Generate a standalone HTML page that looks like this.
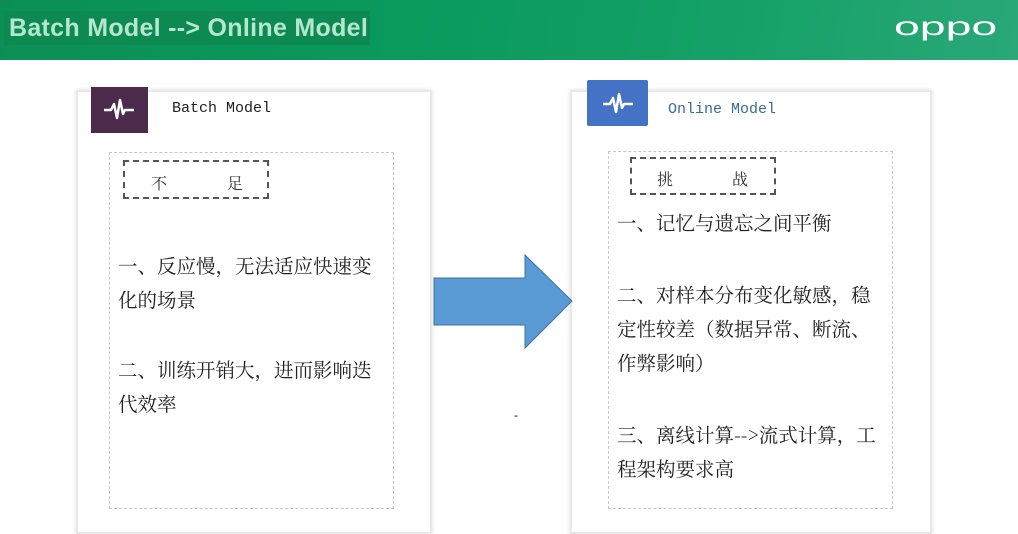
<!DOCTYPE html><html><head><meta charset="utf-8"><style>
body{margin:0;width:1018px;height:517px;overflow:hidden;background:#fff;position:relative;font-family:"Liberation Serif","Noto Serif CJK SC",serif}
.hd{position:absolute;left:0;top:0;width:1018px;height:60px;background:linear-gradient(100deg,#0b8f55 0%,#0a9a5c 40%,#14a066 70%,#2aa878 100%)}
.tt{position:absolute;left:4px;top:11px;width:366px;height:34px;background:#0c8a52;color:#b5e6cf;font:bold 25px "Liberation Sans",sans-serif;line-height:34px;padding-left:5px;box-sizing:border-box;letter-spacing:0.3px}
.oppo{position:absolute;left:894px;top:8px;color:#fff;font:32px "Liberation Sans",sans-serif;transform-origin:left center;transform:scale(1.45,0.8)}
.p{position:absolute;background:#fff;border:2px solid #e8e8e8;box-shadow:0 0 4px #ddd}
.ic{position:absolute}
.in{position:absolute;border:1px dashed #c8c8c8}
.lb{position:absolute;border:2px dashed #555;font-size:16px;color:#333;box-sizing:border-box}
.tx{position:absolute;font-size:19.5px;color:#222;line-height:34px;font-family:"Noto Serif CJK SC",serif}
.mono{position:absolute;font:15px "Liberation Mono",monospace}
</style></head><body>
<div class="hd"><div class="tt">Batch Model --&gt; Online Model</div><div class="oppo">oppo</div></div>
<div class="p" style="left:76px;top:90px;width:352px;height:440px"></div>
<div class="p" style="left:570px;top:90px;width:358px;height:440px"></div>
<div class="ic" style="left:91px;top:87px;width:57px;height:46px;background:#4b2a4b"></div>
<div class="ic" style="left:587px;top:80px;width:61px;height:46px;background:#4472c4;border-radius:2px"></div>
<svg style="position:absolute;left:101px;top:96px" width="36" height="28"><path d="M3 14H10L13 8L16 22L19 4L22 18L24 14H33" fill="none" stroke="#fff" stroke-width="2.5" stroke-linejoin="round"/></svg>
<svg style="position:absolute;left:600px;top:90px" width="36" height="28"><path d="M3 14H10L13 8L16 22L19 4L22 18L24 14H33" fill="none" stroke="#fff" stroke-width="2.5" stroke-linejoin="round"/></svg>
<div class="mono" style="left:172px;top:100px;color:#222">Batch Model</div>
<div class="mono" style="left:668px;top:101px;color:#3a6a9a">Online Model</div>
<div class="in" style="left:109px;top:152px;width:283px;height:355px"></div>
<div class="in" style="left:608px;top:151px;width:283px;height:356px"></div>
<div class="lb" style="left:123px;top:160px;width:146px;height:39px"><span style="position:absolute;left:26px;top:9px">不</span><span style="position:absolute;left:102px;top:9px">足</span></div>
<div class="lb" style="left:630px;top:157px;width:146px;height:38px"><span style="position:absolute;left:25px;top:8px">挑</span><span style="position:absolute;left:100px;top:8px">战</span></div>
<div class="tx" style="left:118px;top:248px">一、反应慢，无法适应快速变<br>化的场景</div>
<div class="tx" style="left:118px;top:352px">二、训练开销大，进而影响迭<br>代效率</div>
<div class="tx" style="left:617px;top:205px">一、记忆与遗忘之间平衡</div>
<div class="tx" style="left:617px;top:277px">二、对样本分布变化敏感，稳<br>定性较差（数据异常、断流、<br>作弊影响）</div>
<div class="tx" style="left:617px;top:417px">三、离线计算--&gt;流式计算，工<br>程架构要求高</div>
<div style="position:absolute;left:514px;top:408px;font-size:12px">-</div>
<svg style="position:absolute;left:430px;top:250px" width="150" height="105"><path d="M4 28H95V5L142 51L95 98V75H4Z" fill="#5b9bd5" stroke="#41719c" stroke-width="1"/></svg>
</body></html>
